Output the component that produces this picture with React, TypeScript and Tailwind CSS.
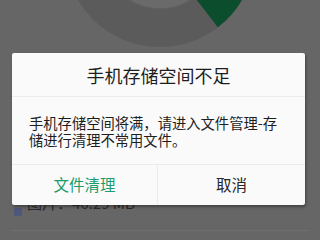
import React from 'react';

const font = { fontFamily: '"Noto Sans CJK SC", "Noto Sans", sans-serif' };

function UsageRing() {
  // ring centre sits above the top edge; only the lower part is visible
  const cx = 160;
  const cy = -48;
  const R = 95;
  const r = 57;
  const a1 = (52.5 * Math.PI) / 180;
  const o1 = [cx + R * Math.cos(a1), cy + R * Math.sin(a1)];
  const i1 = [cx + r * Math.cos(a1), cy + r * Math.sin(a1)];
  const wedge = `M ${o1[0]} ${o1[1]} A ${R} ${R} 0 0 0 ${cx + R} ${cy} L ${cx + r} ${cy} A ${r} ${r} 0 0 1 ${i1[0]} ${i1[1]} Z`;

  return (
    <svg width="320" height="50" viewBox="0 0 320 50" className="block">
      <circle cx={cx} cy={cy} r={R} fill="#5b5b5b" />
      <path d={wedge} fill="#0b4d2c" />
      <circle cx={cx} cy={cy} r={r} fill="#6a6a6a" stroke="#5f5f5f" strokeWidth="1.5" />
    </svg>
  );
}

export default function App() {
  return (
    <div className="relative w-[320px] h-[240px] overflow-hidden bg-[#666666]" style={font}>
      {/* dimmed page behind the dialog */}
      <div className="flex flex-col">
        <UsageRing />
        <div className="mt-[146px] flex items-start gap-[5px] pl-[14px] h-[20px]">
          <span className="mt-[12px] w-[8px] h-[8px] bg-[#4e587c]" />
          <span className="text-[15px] leading-[14px] text-[#2b2b2b]">图片：46.29 MB</span>
        </div>
        <div className="mt-[14px] mx-[10px] h-px bg-[#6e6e6e]" />
      </div>

      {/* dialog */}
      <div className="absolute left-[12px] top-[53px] w-[293px] h-[152px] bg-[#fafafa] rounded-[2px] shadow-[1px_2px_3px_rgba(0,0,0,0.35)] flex flex-col">
        <div className="h-[44px] flex items-center justify-center border-b border-[#ececec]">
          <h1 className="text-[18px] leading-none text-[#1e1e1e]">手机存储空间不足</h1>
        </div>
        <div className="flex-1 pl-[17px] pr-[24px] pt-[17px]">
          <p className="text-[14.3px] leading-[17px] text-[#1e1e1e]">
            手机存储空间将满，请进入文件管理-存储进行清理不常用文件。
          </p>
        </div>
        <div className="h-[41px] flex border-t border-[#ececec]">
          <button className="w-[146px] flex items-center justify-center text-[15.5px] text-[#1a9c6c] border-r border-[#ececec]">
            文件清理
          </button>
          <button className="flex-1 flex items-center justify-center text-[15.5px] text-[#262626]">
            取消
          </button>
        </div>
      </div>
    </div>
  );
}
